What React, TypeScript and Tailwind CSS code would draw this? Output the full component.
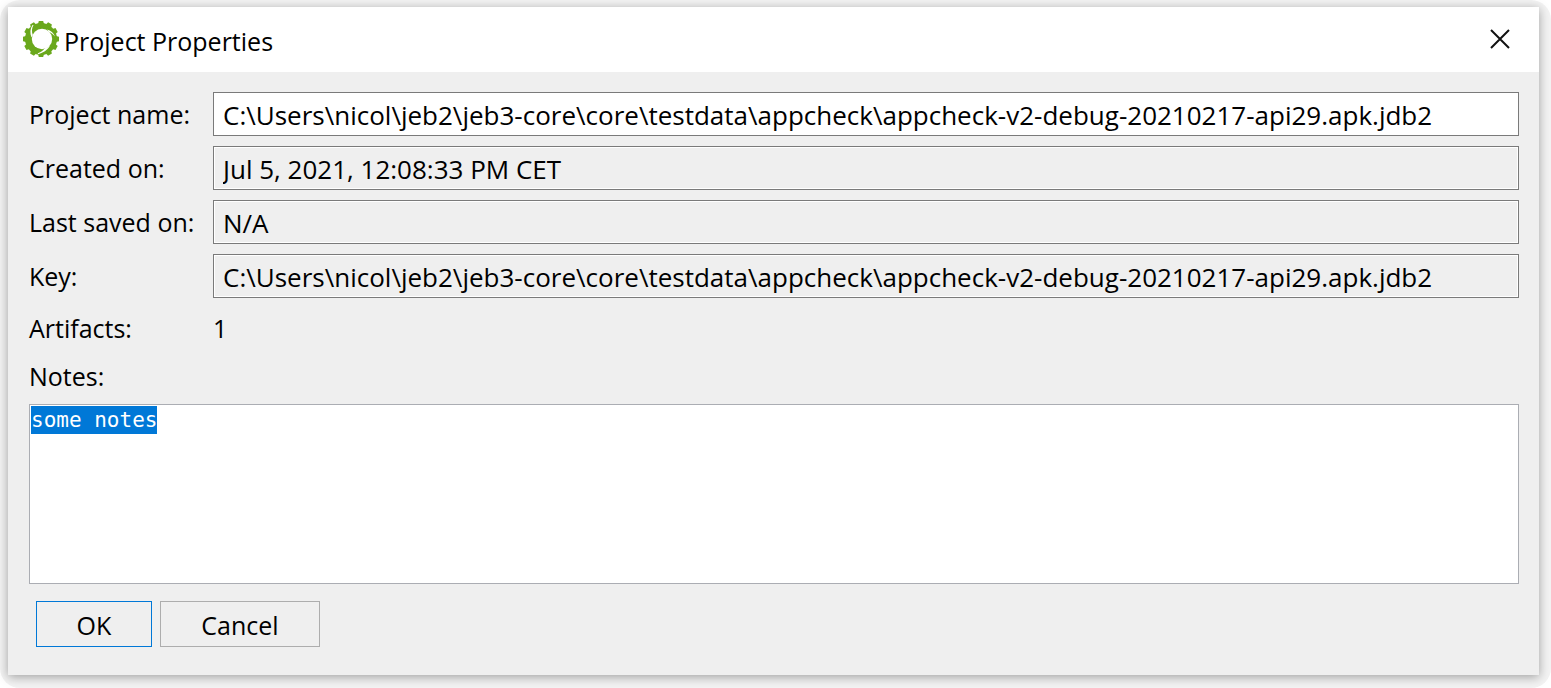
import { useEffect, useRef } from "react";

const path =
  "C:\\Users\\nicol\\jeb2\\jeb3-core\\core\\testdata\\appcheck\\appcheck-v2-debug-20210217-api29.apk.jdb2";

const fields = [
  { id: "name", label: "Project name:", value: path, editable: true },
  { id: "created", label: "Created on:", value: "Jul 5, 2021, 12:08:33 PM CET", editable: false },
  { id: "saved", label: "Last saved on:", value: "N/A", editable: false },
  { id: "key", label: "Key:", value: path, editable: false },
];

function Logo() {
  const teeth = [0, 30, 60, 90, 120, 150, 180, 210, 240, 270, 300, 330];
  return (
    <svg viewBox="0 0 36 36" className="size-9 shrink-0" aria-hidden="true">
      <g fill="#6aa81c">
        <circle cx="18" cy="18" r="16" />
        {teeth.map((a) => (
          <path key={a} d="M15 3 L15.800 0 H20.200 L21 3 Z" transform={`rotate(${a} 18 18)`} />
        ))}
      </g>
      <circle cx="19" cy="18" r="10.200" fill="#fff" />
      <g fill="#fff">
        <path d="M9.500 4 C7 8 6.800 12 8.500 16.500 L9.800 14 C8.600 10.500 8.600 7.500 10.500 4 Z" />
        <path d="M24 8.500 C28 9.500 30.500 12 32 15.500 C30 13 28.500 12 26 11 Z" />
        <path d="M27 25 C24.500 29 20 32 14.500 33.500 L15 32.200 C18 31 20 29.500 21.500 27.500 Z" />
      </g>
    </svg>
  );
}

export default function App() {
  const notes = useRef<HTMLTextAreaElement>(null);

  useEffect(() => {
    notes.current?.focus();
    notes.current?.select();
  }, []);

  return (
    <div className="flex min-h-screen overflow-hidden bg-white font-['Open_Sans',sans-serif] text-[25px] leading-8 text-black">
      <div className="flex flex-1 rounded-[20px] bg-[#f3f3f3] px-2 pt-[7px] pr-3 pb-[13px]">
        <main
          role="dialog"
          aria-labelledby="title"
          className="flex flex-1 flex-col bg-[#efefef] shadow-[0_2px_10px_rgba(0,0,0,0.35)]"
        >
          <header className="flex h-[65px] items-center bg-white pr-[25px] pb-0.5 pl-[15px]">
            <Logo />
            <h1 id="title" className="flex-1 pt-1 pl-[5px]">
              Project Properties
            </h1>
            <button type="button" aria-label="Close" className="p-1">
              <svg viewBox="0 0 20 20" className="size-5" fill="none" stroke="#111" strokeWidth="2">
                <path d="M1 1 L19 19 M19 1 L1 19" />
              </svg>
            </button>
          </header>
          <form className="flex flex-1 flex-col pt-5 pr-5 pb-7 pl-[21px]" onSubmit={(e) => e.preventDefault()}>
            <div className="grid grid-cols-[174px_1fr] items-center gap-x-2.5 gap-y-2.5">
              {fields.map((f) => (
                <div key={f.id} className="contents">
                  <label htmlFor={f.id} className="whitespace-nowrap">
                    {f.label}
                  </label>
                  <input
                    id={f.id}
                    defaultValue={f.value}
                    readOnly={!f.editable}
                    className={`h-11 w-full min-w-0 border border-[#7a7a7a] px-[9px] pt-0.5 text-[26px] shadow-[inset_0_0_0_1px_#fff] outline-none ${f.editable ? "bg-white" : "bg-transparent"}`}
                  />
                </div>
              ))}
            </div>
            <dl className="grid h-[52px] grid-cols-[174px_1fr] items-center gap-x-2.5 pt-2">
              <dt>Artifacts:</dt>
              <dd>1</dd>
            </dl>
            <label htmlFor="notes" className="pt-2.5 pb-3">
              Notes:
            </label>
            <textarea
              id="notes"
              ref={notes}
              defaultValue="some notes"
              className="block min-h-45 w-full flex-1 resize-none border border-[#abadb3] bg-white p-px font-['DejaVu_Sans_Mono',monospace] text-[21px] leading-7 outline-none selection:bg-[#0078d7] selection:text-white"
            />
            <div className="flex gap-2 pt-[17px] pl-[7px]">
              <button type="submit" className="h-[46px] w-29 border border-[#0078d7] pt-0.5">
                OK
              </button>
              <button type="button" className="h-[46px] w-40 border border-[#adadad] pt-0.5">
                Cancel
              </button>
            </div>
          </form>
        </main>
      </div>
    </div>
  );
}
